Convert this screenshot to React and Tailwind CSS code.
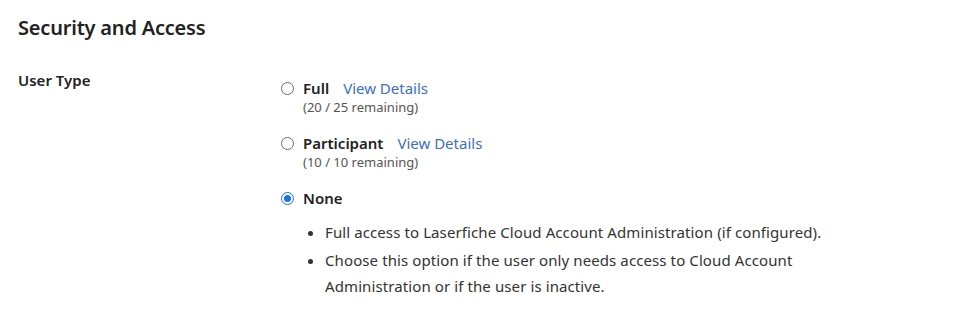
import React, { useState } from 'react'

const options = [
  { key: 'full', label: 'Full', remaining: '(20 / 25 remaining)', details: true },
  { key: 'participant', label: 'Participant', remaining: '(10 / 10 remaining)', details: true },
  { key: 'none', label: 'None' },
]

function Radio({ checked }) {
  return (
    <span
      className={`flex h-[13px] w-[13px] shrink-0 items-center justify-center rounded-full border ${
        checked ? 'border-[#1a73e8]' : 'border-[#6b6b6b]'
      }`}
    >
      {checked && <span className="h-[7px] w-[7px] rounded-full bg-[#1a73e8]" />}
    </span>
  )
}

export default function App() {
  const [userType, setUserType] = useState('none')

  return (
    <div className="min-h-[331px] bg-white px-[18px] pt-[14px] font-['Noto_Sans',sans-serif] text-[#222]">
      <h2 className="text-[20px] font-semibold leading-[28px] tracking-[-0.2px]">Security and Access</h2>

      <div className="mt-[28px] flex">
        <div className="w-[263px] shrink-0 text-[15px] font-semibold leading-[20px]">User Type</div>

        <div className="flex w-[580px] flex-col pt-[8px]">
          {options.map((opt) => (
            <div key={opt.key} className={opt.remaining ? 'mb-[17px]' : ''}>
              <label
                className="flex cursor-pointer items-center gap-[9px]"
                onClick={() => setUserType(opt.key)}
              >
                <Radio checked={userType === opt.key} />
                <span className="text-[15px] font-semibold leading-[20px]">{opt.label}</span>
                {opt.details && (
                  <a className="ml-[5px] text-[15px] leading-[20px] text-[#3a6fc4]" href="#">
                    View Details
                  </a>
                )}
              </label>
              {opt.remaining && (
                <div className="pl-[22px] text-[13px] leading-[18px] text-[#555]">{opt.remaining}</div>
              )}
            </div>
          ))}

          {userType === 'none' && (
            <ul className="mt-[11px] list-disc pl-[44px] text-[15px] leading-[26px] tracking-[0.1px] text-[#333]">
              <li className="mb-[2px]">Full access to Laserfiche Cloud Account Administration (if configured).</li>
              <li>Choose this option if the user only needs access to Cloud Account Administration or if the user is inactive.</li>
            </ul>
          )}
        </div>
      </div>
    </div>
  )
}
